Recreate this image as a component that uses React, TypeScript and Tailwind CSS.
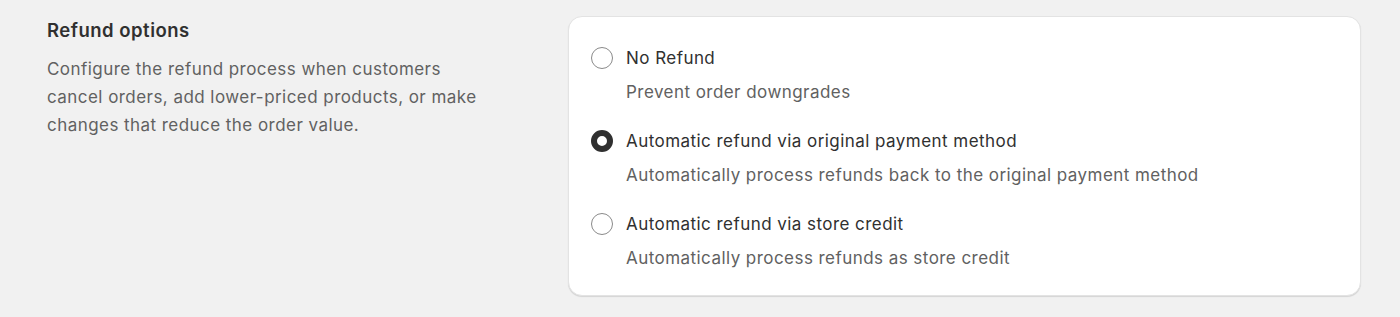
import React from "react";

const options = [
  { label: "No Refund", desc: "Prevent order downgrades", checked: false },
  { label: "Automatic refund via original payment method", desc: "Automatically process refunds back to the original payment method", checked: true },
  { label: "Automatic refund via store credit", desc: "Automatically process refunds as store credit", checked: false },
];

function Radio({ checked }: { checked: boolean }) {
  return checked ? (
    <span className="block w-[22px] h-[22px] rounded-full border-[6px] border-[#303030] bg-white box-border" />
  ) : (
    <span className="block w-[22px] h-[22px] rounded-full border border-[#8a8a8a] bg-white box-border" />
  );
}

export default function App() {
  return (
    <div className="w-[1400px] h-[317px] bg-[#f1f1f1] font-['Inter',sans-serif] tracking-[0.45px] flex pt-[16px] pl-[47px] pr-[39px]">
      <div className="w-[521px] shrink-0">
        <h2 className="text-[18.5px] leading-[28px] font-semibold text-[#303030] tracking-[0.5px]">Refund options</h2>
        <p className="mt-[11px] w-[432px] text-[17px] leading-[28px] text-[#616161]">
          Configure the refund process when customers cancel orders, add lower-priced products, or make changes that reduce the order value.
        </p>
      </div>
      <div className="flex-1 h-[280px] bg-white rounded-[14px] border border-[#e3e3e3] shadow-[0_1px_1px_rgba(0,0,0,0.12)] pt-[27px] px-[22px] flex flex-col gap-[21px]">
        {options.map((o) => (
          <div key={o.label} className="flex gap-[13px]">
            <div className="h-[28px] flex items-center">
              <Radio checked={o.checked} />
            </div>
            <div>
              <div className="text-[17px] leading-[28px] text-[#303030]">{o.label}</div>
              <div className="mt-[6px] text-[17px] leading-[28px] text-[#616161]">{o.desc}</div>
            </div>
          </div>
        ))}
      </div>
    </div>
  );
}
